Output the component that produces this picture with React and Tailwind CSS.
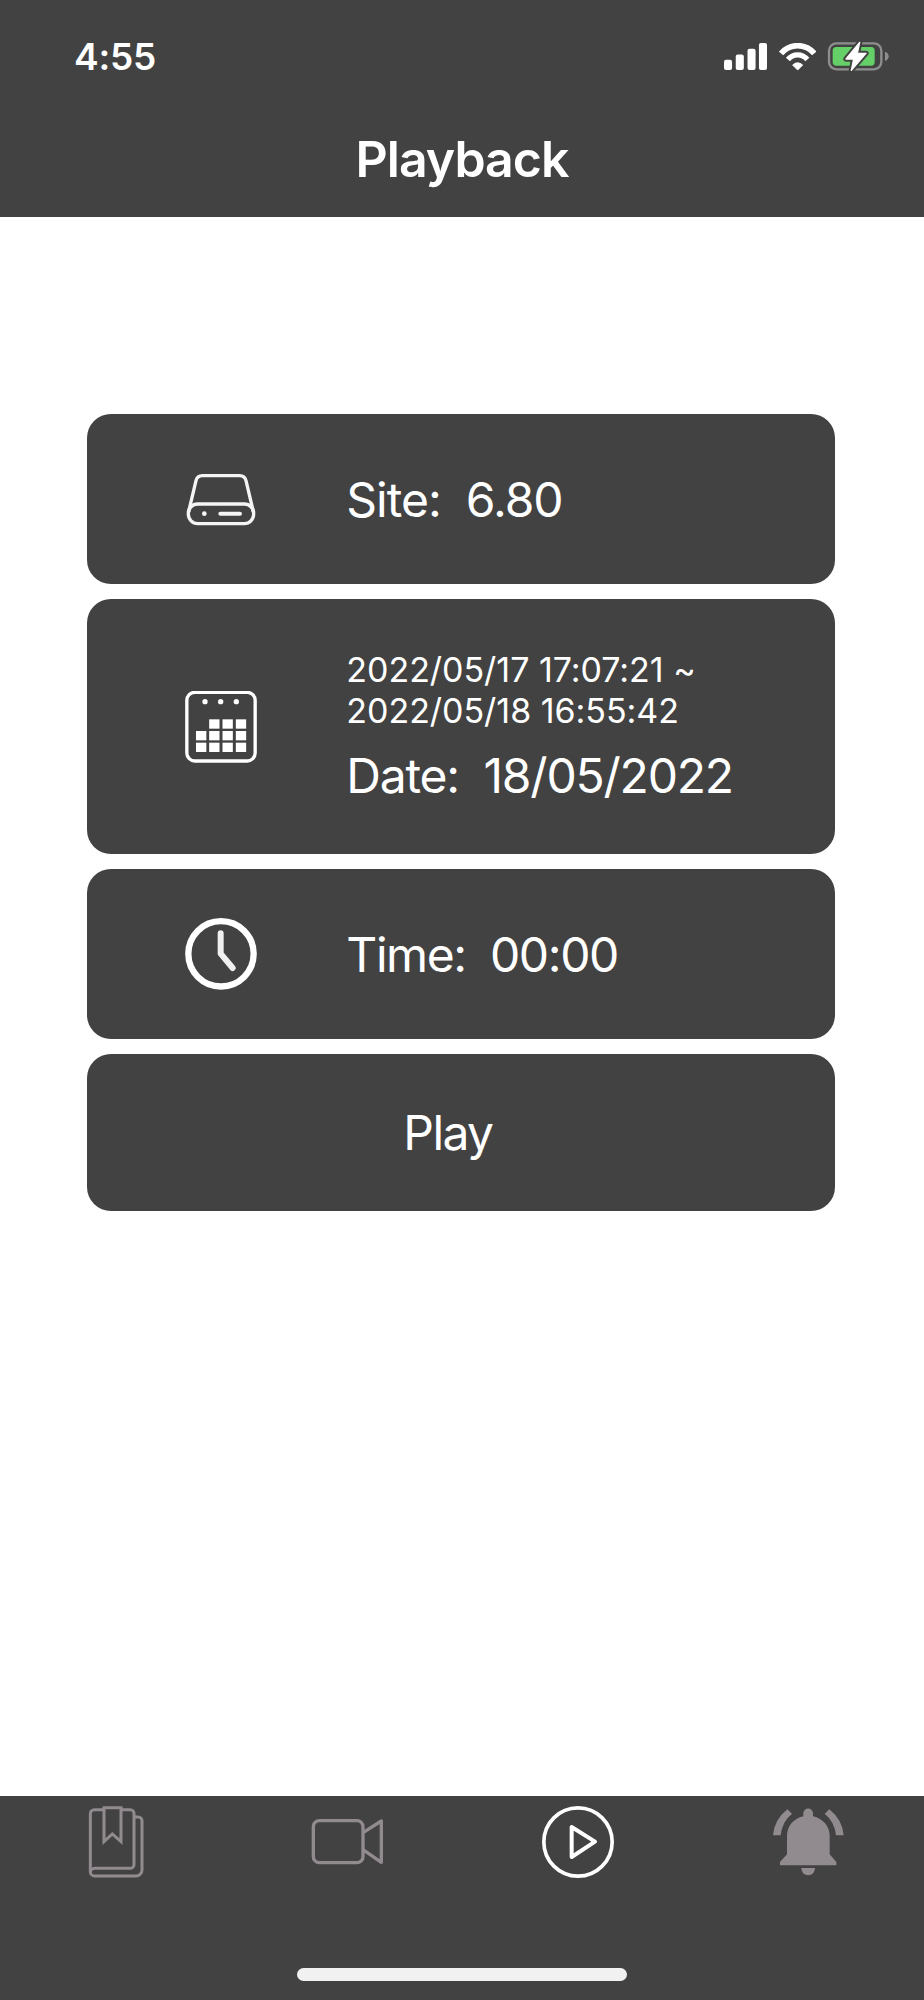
const SignalIcon = () => (
  <svg viewBox="0 0 128 80" className="w-[43px] h-[27px]" fill="#fff">
    <rect x="0" y="50" width="24" height="30" rx="6" />
    <rect x="35" y="34" width="24" height="46" rx="6" />
    <rect x="70" y="17" width="24" height="63" rx="6" />
    <rect x="104" y="0" width="24" height="80" rx="6" />
  </svg>
);

const WifiIcon = () => (
  <svg viewBox="0 0 112 84" className="w-[37.3px] h-[28px]" fill="none" stroke="#fff">
    <path d="M6.2 31.2a65 65 0 0 1 99.6 0" strokeWidth="17" />
    <path d="M26.9 49.4a37.5 37.5 0 0 1 58.2 0" strokeWidth="16" />
    <path d="M41 66q15-13 30 0L56 81z" fill="#fff" strokeWidth="3" strokeLinejoin="round" />
  </svg>
);

const BatteryIcon = () => (
  <svg viewBox="0 0 182 87" className="w-[60.7px] h-[29px] overflow-visible">
    <rect x="3" y="4" width="157" height="78" rx="22" fill="none" stroke="#8e8e8e" strokeWidth="7" />
    <rect x="14" y="15" width="126" height="56" rx="11" fill="#65d067" />
    <path d="M171 29q11 4 11 14t-11 14z" fill="#8e8e8e" />
    <path
      d="M95 1 54 51h23l-7 34 44-51H88z"
      fill="#424242"
      stroke="#424242"
      strokeWidth="16"
      strokeLinejoin="round"
    />
    <path d="M95 1 54 51h23l-7 34 44-51H88z" fill="#fff" stroke="#fff" strokeWidth="4" strokeLinejoin="round" />
  </svg>
);

const DriveIcon = () => (
  <svg viewBox="0 0 216 216" className="size-[72px] shrink-0" fill="none" stroke="#f5f5f5" strokeWidth="10">
    <path d="M11 146 33 53q4-15 19-15h112q15 0 19 15l22 93" />
    <rect x="10" y="123" width="196" height="59" rx="28" />
    <path d="M106 152h59" strokeWidth="12" strokeLinecap="round" />
    <circle cx="58" cy="152" r="7" fill="#f5f5f5" stroke="none" />
  </svg>
);

const CalendarIcon = () => (
  <svg viewBox="0 0 216 216" className="size-[72px] shrink-0" fill="#fff">
    <rect x="5.5" y="4" width="205" height="206" rx="24" fill="none" stroke="#fff" strokeWidth="10" />
    {[60, 107, 154].map((x) => (
      <circle key={x} cx={x} cy="32" r="8" />
    ))}
    {[85, 120, 155].map((y) =>
      [33, 72.5, 112.5, 152.5]
        .filter((x) => x > 33 || y > 85)
        .map((x) => <rect key={`${x}-${y}`} x={x} y={y} width="31" height="28" />)
    )}
  </svg>
);

const ClockIcon = () => (
  <svg viewBox="0 0 216 216" className="size-[72px] shrink-0" fill="none" stroke="#fff">
    <circle cx="108" cy="107.5" r="98" strokeWidth="19" />
    <path d="M107 46v61l36 43" strokeWidth="18" strokeLinecap="round" strokeLinejoin="round" stroke="#f0f0f0" />
  </svg>
);

const BookIcon = () => (
  <svg viewBox="0 0 216 216" className="size-[72px]" fill="none" stroke="#918b8f" strokeWidth="9">
    <path d="M72 11H43a12 12 0 0 0-12 12v174a13 13 0 0 0 13 13h124a18 18 0 0 0 18-18V44a11 11 0 0 0-11-11h-12" />
    <path d="M123 11h28a11 11 0 0 1 11 11v154a11 11 0 0 1-11 11H44a13 13 0 0 0-13 12" />
    <path d="M72 5h51v102L97 84l-25 23z" />
  </svg>
);

const CameraIcon = () => (
  <svg viewBox="0 0 216 216" className="size-[72px]" fill="none" stroke="#918b8f" strokeWidth="10">
    <rect x="7" y="44" width="149" height="126" rx="18" />
    <path d="M156 80 211 45v124l-55-38" strokeLinejoin="round" />
  </svg>
);

const PlayIcon = () => (
  <svg viewBox="0 0 216 216" className="size-[72px]" fill="none" stroke="#fff">
    <circle cx="108" cy="108" r="102.5" strokeWidth="11" />
    <path d="M89 63v90l70-46z" strokeWidth="12" strokeLinejoin="round" />
  </svg>
);

const BellIcon = () => (
  <svg viewBox="0 0 216 216" className="size-[72px]" fill="#918b8f">
    <path d="M91 22a14.5 14.5 0 0 1 29 0v9c30 7 50 30 50 58v56l20 23v10H21v-10l21-23V89c0-28 19-51 49-58z" />
    <path d="M85 186h41a20.500 22 0 0 1-41 0z" />
    <path d="M0 88q4-47 43-78l14 13Q27 47 23 88z" />
    <path d="M212 88q-4-47-43-78l-14 13q30 24 34 65z" />
  </svg>
);

const tabs = [
  { name: 'Bookmarks', icon: BookIcon },
  { name: 'Live', icon: CameraIcon },
  { name: 'Playback', icon: PlayIcon },
  { name: 'Alerts', icon: BellIcon }
];

const Row = ({ icon: Icon, className, children }) => (
  <div className={`flex items-center rounded-[24px] bg-[#424242] pl-[98px] ${className}`}>
    <Icon />
    <div className="pl-[89px] text-[48px] leading-[58px] whitespace-pre">{children}</div>
  </div>
);

export default function App() {
  return (
    <div className="flex h-[2000px] w-[924px] flex-col bg-white font-['Inter','Liberation_Sans',sans-serif] text-white">
      <header className="h-[217px] bg-[#424242]">
        <div className="flex h-[113px] items-center justify-between pr-[35px] pl-[74px]">
          <span className="text-[37px] leading-none font-semibold tracking-[-0.2px]">4:55</span>
          <div className="flex items-center gap-3">
            <SignalIcon />
            <WifiIcon />
            <BatteryIcon />
          </div>
        </div>
        <h1 className="text-center text-[50px] leading-[92px] font-semibold tracking-[-1px]">Playback</h1>
      </header>

      <main className="flex flex-1 flex-col gap-[15px] pt-[197px] pr-[89.5px] pl-[87.3px]">
        <Row icon={DriveIcon} className="h-[170px]">
          <p className="pt-px tracking-[-1px]">{'Site:  6.80'}</p>
        </Row>
        <Row icon={CalendarIcon} className="h-[255px]">
          <p className="text-[34px] leading-[41px] tracking-[-0.03px]">2022/05/17 17:07:21 ~</p>
          <p className="text-[34px] leading-[41px] tracking-[-0.03px]">2022/05/18 16:55:42</p>
          <p className="mt-4 tracking-[-1.2px]">{'Date:  18/05/2022'}</p>
        </Row>
        <Row icon={ClockIcon} className="h-[170px]">
          <p className="pt-px tracking-[-1.4px]">{'Time:  00:00'}</p>
        </Row>
        <button className="h-[157px] rounded-[24px] bg-[#424242] pr-[26px] text-[48px] tracking-[-1.6px]">Play</button>
      </main>

      <footer className="flex h-[204.5px] flex-col items-center justify-between bg-[#424242] pt-[10.5px] pb-[19.5px]">
        <nav className="grid w-full grid-cols-4">
          {tabs.map(({ name, icon: Icon }) => (
            <a key={name} aria-label={name} className="flex justify-center">
              <Icon />
            </a>
          ))}
        </nav>
        <div className="h-[13px] w-[330px] rounded-full bg-[#f1f1f1]" />
      </footer>
    </div>
  );
}
